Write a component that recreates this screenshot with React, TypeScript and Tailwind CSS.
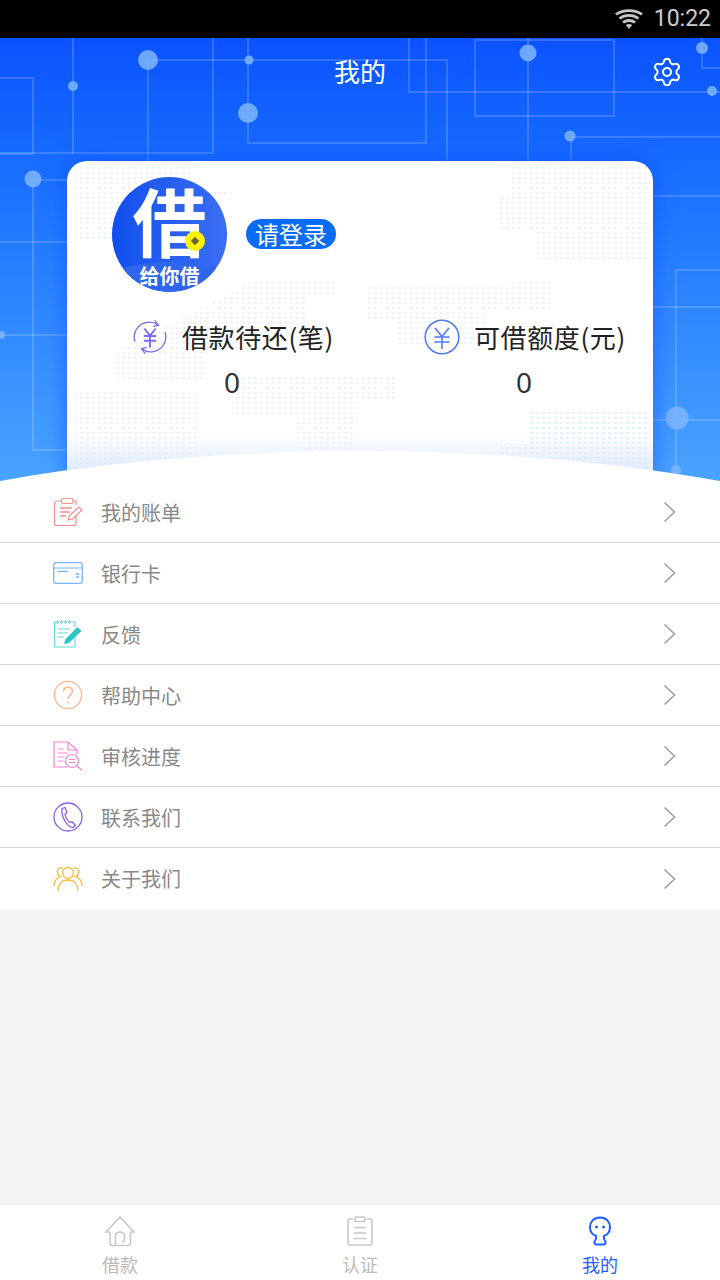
import { Settings } from "lucide-react";
import type { ReactNode } from "react";

const cjk = "font-['Noto_Sans_CJK_SC','Noto_Sans',sans-serif]";

function Wifi() {
    return (
        <svg width="28" height="20" viewBox="0 0 28 20" fill="none" stroke="#c4c4c4" strokeWidth="2.800">
            <path d="M1 5.500C8 0.300 20 0.300 27 5.500" />
            <path d="M4.500 9.500C10 5.400 18 5.400 23.500 9.500" />
            <path d="M8 13.500C11.500 10.800 16.500 10.800 20 13.500" />
            <path d="M10.800 16L14 20L17.200 16C15.200 14.600 12.800 14.600 10.800 16Z" fill="#c4c4c4" stroke="none" />
        </svg>
    );
}

// circuit board drawing behind the hero
function Circuit() {
    const lines = [
        "M73 0V116", "M0 115H213V0", "M148 22V123", "M148 22H447V123", "M248 0V105H426V0",
        "M409 0V54H720", "M475 2H614V78H475Z", "M528 0V123", "M702 0V30H720", "M0 40H33V116H0",
        "M571 98V123", "M571 99H720", "M33 141V412H67", "M33 142H67", "M0 204H67", "M0 297H67",
        "M653 158H720", "M676 232H720", "M653 269H720", "M653 382H720", "M676 232V444",
    ];
    const dots: [number, number, number][] = [
        [148, 22, 10], [249, 22, 4.500], [248, 75, 10], [73, 48, 5], [528, 15, 8.500],
        [702, 10, 6], [712, 53, 5], [570, 98, 5.500], [33, 141, 8.500], [677, 380, 11.500],
        [676, 432, 5], [1, 297, 4],
    ];
    return (
        <svg className="absolute inset-0" width="720" height="444" viewBox="0 0 720 444" fill="none">
            {lines.map((d) => (
                <path key={d} d={d} stroke="#ffffff" strokeOpacity="0.22" strokeWidth="1.500" />
            ))}
            {dots.map(([x, y, r]) => (
                <circle key={x + "-" + y} cx={x} cy={y} r={r} fill="#7db6ff" fillOpacity="0.85" />
            ))}
        </svg>
    );
}

// faint dotted world map printed on the card
function WorldMap() {
    return (
        <svg className="absolute inset-0" width="586" height="321" viewBox="0 0 586 321" fill="none">
            <defs>
                <pattern id="mapDots" width="6" height="5" patternUnits="userSpaceOnUse">
                    <rect x="1" y="1" width="3" height="2" fill="#f0f3fa" />
                </pattern>
                <pattern id="mapDotsBlue" width="6" height="5" patternUnits="userSpaceOnUse">
                    <rect x="1" y="1" width="3" height="2" fill="#e8eefa" />
                </pattern>
            </defs>
            <path fill="url(#mapDots)" d="M8 6H125V30H165V36H125V80H8Z" />
            <path fill="url(#mapDots)" d="M445 6H580V100H470V70H430V36H445Z" />
            <path fill="url(#mapDots)" d="M100 165L190 118H270V135H240V165H195V190H140V220H50V190Z" />
            <path fill="url(#mapDots)" d="M300 125H420L485 118V150H420V185H330V160H300Z" />
            <path fill="url(#mapDots)" d="M8 230H130V321H8Z" />
            <path fill="url(#mapDots)" d="M165 215H330V240H290V290H230V255H165Z" />
            <path fill="url(#mapDotsBlue)" d="M460 250H580V321H430V285H460Z" />
        </svg>
    );
}

function LoanIcon() {
    return (
        <svg width="38" height="38" viewBox="0 0 38 38" fill="none" stroke="#7a6cf6" strokeWidth="1.400">
            <path d="M3 24C0.500 14 6 5 16 3.500C20 3 24 3.500 27 6" />
            <path d="M24 1.500L28 6.500L22.500 8" />
            <path d="M35 14C37.500 24 32 33 22 34.500C18 35 14 34.500 11 32" />
            <path d="M14 36.500L10 31.500L15.500 30" />
            <path d="M13 10L19 17.500L25 10M12.500 18H25.500M12.500 23H25.500M19 17.500V30" strokeWidth="2" />
        </svg>
    );
}

function YuanIcon() {
    return (
        <svg width="36" height="36" viewBox="0 0 36 36" fill="none" stroke="#4f78f2" strokeWidth="1.500">
            <circle cx="18" cy="18" r="16.800" />
            <path d="M11 9L18 17.500L25 9M10.500 18H25.500M10.500 23H25.500M18 17.500V30" />
        </svg>
    );
}

function BillIcon() {
    return (
        <svg width="30" height="30" viewBox="0 0 30 30" fill="none" stroke="#fb8c8c" strokeWidth="1.200">
            <path d="M9 4H3.500A2 2 0 0 0 1.500 6V26.500A2 2 0 0 0 3.500 28.500H21A2 2 0 0 0 23 26.500V19" />
            <path d="M20 4H23V8" />
            <rect x="8.500" y="1.500" width="11.500" height="5" rx="1.500" />
            <path d="M7 11H19M7 15H17M7 19H13" strokeWidth="1.400" />
            <path d="M15 23L16.500 18.500L26 10L29 13L19.500 22Z" />
        </svg>
    );
}

function CardIcon() {
    return (
        <svg width="30" height="22" viewBox="0 0 30 22" fill="none" stroke="#7bb4fb" strokeWidth="1.300">
            <rect x="0.700" y="0.700" width="28.600" height="20.600" rx="2.500" />
            <path d="M0.700 6H29.300" strokeWidth="1" />
            <path d="M4 9.500H15" />
            <path d="M23 12H26M23 15H26" strokeWidth="1.500" />
        </svg>
    );
}

function NoteIcon() {
    return (
        <svg width="30" height="30" viewBox="0 0 30 30" fill="none" stroke="#5fdcd8" strokeWidth="1.100">
            <path d="M22 8V3H1.500V28H22V16" />
            <path d="M4.500 1V5M8.500 1V5M12.500 1V5M16.500 1V5" />
            <path d="M5 10H17M5 14H15M5 18H11" />
            <path d="M11 25L12.500 20L24.500 8L28.500 12L16 24Z" fill="#2cc5c5" stroke="none" />
        </svg>
    );
}

function HelpIcon() {
    return (
        <svg width="30" height="30" viewBox="0 0 30 30" fill="none" stroke="#fdb68a" strokeWidth="1.300">
            <circle cx="15" cy="15" r="13.600" />
            <path d="M10.500 11.500C10.500 5.500 19.500 6 19.500 11C19.500 14.500 15 15 15 19" strokeWidth="1.500" />
            <circle cx="15" cy="22.500" r="1" fill="#fdb68a" stroke="none" />
        </svg>
    );
}

function ReviewIcon() {
    return (
        <svg width="30" height="30" viewBox="0 0 30 30" fill="none" stroke="#fb80d8" strokeWidth="1.200">
            <path d="M14 26H1V1H15L24 9V13" />
            <path d="M15 1V9H24" />
            <path d="M5 8H11M5 12H15M5 16H11M5 20H10" />
            <circle cx="19" cy="20" r="6.500" />
            <path d="M16 18.500H22M16 21.500H22" strokeWidth="1" />
            <path d="M24 25L29 29.500" />
        </svg>
    );
}

function PhoneIcon() {
    return (
        <svg width="30" height="30" viewBox="0 0 30 30" fill="none" stroke="#8b5cf0" strokeWidth="1.300">
            <circle cx="15" cy="15" r="14" />
            <path d="M9 6.500L12 5.500L14 10.500L12 12C12.500 15 14.500 18.500 17 20.500L19 19.500L22.500 23.500L20 25.500C14 25 8 15 9 6.500Z" />
        </svg>
    );
}

function GroupIcon() {
    return (
        <svg width="30" height="26" viewBox="0 0 30 26" fill="none" stroke="#fdbb3a" strokeWidth="1.300">
            <circle cx="15" cy="7" r="5.500" />
            <path d="M5 25C5 18 9 14 15 14C21 14 25 18 25 25" />
            <path d="M10 2.500C6 0.500 3.500 4 4.500 7C5 9 6.500 10 7.500 10.500C3.500 12 1 15 1 20" />
            <path d="M20 2.500C24 0.500 26.500 4 25.500 7C25 9 23.500 10 22.500 10.500C26.500 12 29 15 29 20" />
        </svg>
    );
}

function Chevron() {
    return (
        <svg width="13" height="22" viewBox="0 0 13 22" fill="none" stroke="#a0a0a0" strokeWidth="1.600">
            <path d="M1.500 1.500L11.500 11L1.500 20.500" />
        </svg>
    );
}

function HomeNav() {
    return (
        <svg width="32" height="32" viewBox="0 0 32 32" fill="none" stroke="#c9c9c9" strokeWidth="1.600">
            <path d="M5.500 17H2L16 2L30 17H26.500V28C26.500 29.500 25.500 30.500 24 30.500H8.500C7 30.500 6 29.500 6 28V17" />
            <path d="M11.500 30V21C11.500 18 14 17 16 17C18 17 20.500 18 20.500 21V25C20.500 26.500 19.500 27 18 27" />
        </svg>
    );
}

function ClipNav() {
    return (
        <svg width="26" height="32" viewBox="0 0 26 32" fill="none" stroke="#c9c9c9" strokeWidth="1.600">
            <path d="M6 4H2.500A1.500 1.500 0 0 0 1 5.500V28A2 2 0 0 0 3 30H23A2 2 0 0 0 25 28V5.500A1.500 1.500 0 0 0 23.500 4H20" />
            <rect x="8" y="2" width="10" height="4.500" rx="1" />
            <path d="M7 12.500H19M7 18H19M7 23.500H19" />
        </svg>
    );
}

function MeNav() {
    return (
        <svg width="24" height="30" viewBox="0 0 24 30" fill="none" stroke="#1f5eff" strokeWidth="2">
            <path d="M12 1.500C5.500 1.500 2 6 2 11C2 16 5 19 8 20C8.500 22 7.500 24.500 6.500 26C6 27.500 7 28.500 8.500 28.500H15.500C17 28.500 18 27.500 17.500 26C16.500 24.500 15.500 22 16 20C19 19 22 16 22 11C22 6 18.500 1.500 12 1.500Z" />
            <circle cx="8.500" cy="11" r="1.500" fill="#1f5eff" stroke="none" />
            <circle cx="15.500" cy="11" r="1.500" fill="#1f5eff" stroke="none" />
        </svg>
    );
}

const rows: { label: string; icon: ReactNode }[] = [
    { label: "我的账单", icon: <BillIcon /> },
    { label: "银行卡", icon: <CardIcon /> },
    { label: "反馈", icon: <NoteIcon /> },
    { label: "帮助中心", icon: <HelpIcon /> },
    { label: "审核进度", icon: <ReviewIcon /> },
    { label: "联系我们", icon: <PhoneIcon /> },
    { label: "关于我们", icon: <GroupIcon /> },
];

function Avatar() {
    return (
        <div className="relative w-[115px] h-[115px] rounded-full overflow-hidden bg-gradient-to-r from-[#0f4fee] to-[#3b6df2]">
            <div className="absolute left-0 right-0 top-[0px] h-[84px] text-center text-white font-bold text-[74px] leading-[84px]">借</div>
            <div className="absolute left-[-20px] right-[-20px] top-[85px] h-[60px] rounded-[50%] bg-[#2f66ee] pt-[2px] text-center text-white font-bold text-[20px] leading-[24px]">给你借</div>
            <div className="absolute left-[73px] top-[54px] w-[20px] h-[20px] rounded-full bg-[#fff200] flex items-center justify-center">
                <div className="w-[6px] h-[6px] rotate-45 bg-[#6b6b20]" />
            </div>
        </div>
    );
}

function Stat({ icon, label }: { icon: ReactNode; label: string }) {
    return (
        <div className="w-[292px] pl-[65px]">
            <div className="flex items-center gap-[14px] h-[38px]">
                <div className="w-[36px] flex justify-center">{icon}</div>
                <span className="text-[26px] leading-[38px] tracking-[0.6px] text-[#222222] whitespace-nowrap">{label}</span>
            </div>
            <div className="w-[200px] mt-[7px] text-center text-[28px] leading-[38px] text-[#333333] font-['Noto_Sans',sans-serif]">0</div>
        </div>
    );
}

export default function App() {
    return (
        <div className={`${cjk} w-[720px] h-[1280px] flex flex-col bg-[#f5f5f5] overflow-hidden`}>
            <div className="h-[38px] shrink-0 bg-black flex items-center justify-end pr-[9px] gap-[11px]">
                <Wifi />
                <span className="font-['Roboto',sans-serif] text-[23px] leading-[38px] text-[#cccccc]">10:22</span>
            </div>

            <div className="relative h-[444px] shrink-0 overflow-hidden bg-gradient-to-b from-[#0c52ff] to-[#4aa3ff]">
                <Circuit />
                <div className="relative h-[70px] flex items-center justify-center">
                    <span className="text-[26px] leading-[66px] pb-[4px] text-white">我的</span>
                    <Settings size={32} strokeWidth={1.500} className="absolute left-[651px] top-[18px] text-white" />
                </div>

                <div className="relative mx-[67px] mt-[53px] h-[321px] rounded-t-[20px] bg-white shadow-[0_0_22px_rgba(10,70,255,0.55)] overflow-hidden">
                    <WorldMap />
                    <div className="absolute left-0 right-0 bottom-0 h-[47px] bg-gradient-to-b from-[#ffffff00] to-[#d4e5ff]" />
                    <div className="relative pt-[16px] pl-[45px] flex items-center">
                        <Avatar />
                        <span className="ml-[19px] mb-[1px] h-[30px] w-[90px] text-center rounded-full bg-[#0a6cf5] text-white text-[24px] leading-[30px]">请登录</span>
                    </div>
                    <div className="relative mt-[26px] flex">
                        <Stat icon={<LoanIcon />} label="借款待还(笔)" />
                        <Stat icon={<YuanIcon />} label="可借额度(元)" />
                    </div>
                </div>

                <svg className="absolute left-0 bottom-0" width="720" height="32" viewBox="0 0 720 32">
                    <path d="M0 31C220 -9 500 -9 720 31V32H0Z" fill="#ffffff" />
                </svg>
            </div>

            <div className="bg-white">
                {rows.map((row, i) => (
                    <div key={row.label} className={`h-[61px] flex items-center pl-[53px] pr-[44px] ${i < rows.length - 1 ? "border-b border-[#d9d9d9]" : ""}`}>
                        <div className="w-[30px] flex justify-center">{row.icon}</div>
                        <span className="ml-[18px] flex-1 pt-[1px] text-[20px] text-[#888888]">{row.label}</span>
                        <Chevron />
                    </div>
                ))}
            </div>

            <div className="flex-1" />

            <div className="h-[76px] shrink-0 grid grid-cols-3 bg-white border-t border-[#f0f0f0]">
                <div className="flex flex-col items-center pt-[10px]">
                    <div className="h-[32px] flex items-center"><HomeNav /></div>
                    <span className="mt-[5px] text-[18px] leading-[24px] text-[#bbbbbb]">借款</span>
                </div>
                <div className="flex flex-col items-center pt-[10px]">
                    <div className="h-[32px] flex items-center"><ClipNav /></div>
                    <span className="mt-[5px] text-[18px] leading-[24px] text-[#bbbbbb]">认证</span>
                </div>
                <div className="flex flex-col items-center pt-[10px]">
                    <div className="h-[32px] flex items-center"><MeNav /></div>
                    <span className="mt-[5px] text-[18px] leading-[24px] text-[#1f5eff]">我的</span>
                </div>
            </div>
        </div>
    );
}
